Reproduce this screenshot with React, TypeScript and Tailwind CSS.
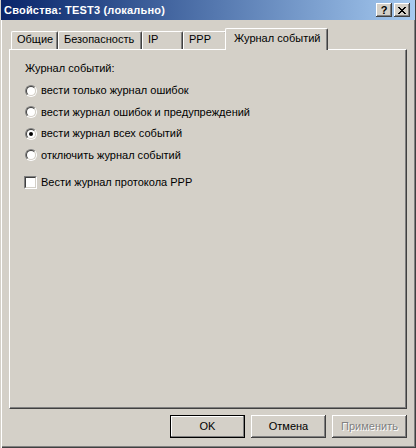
import React from "react";

const bevelOut =
  "shadow-[inset_-1px_-1px_0_#404040,inset_1px_1px_0_#ffffff,inset_-2px_-2px_0_#808080]";

function CaptionButton({ children }: { children: React.ReactNode }) {
  return (
    <div
      className={`flex h-[14px] w-[16px] items-center justify-center bg-[#d4d0c8] ${bevelOut}`}
    >
      {children}
    </div>
  );
}

function Radio({ checked }: { checked?: boolean }) {
  return (
    <div className="h-[12px] w-[12px] shrink-0 rounded-full border border-b-white border-l-[#808080] border-r-white border-t-[#808080]">
      <div className="flex h-full w-full items-center justify-center rounded-full border border-b-[#d4d0c8] border-l-[#404040] border-r-[#d4d0c8] border-t-[#404040] bg-white">
        {checked && <div className="h-[4px] w-[4px] rounded-full bg-black" />}
      </div>
    </div>
  );
}

function Checkbox() {
  return (
    <div className="h-[13px] w-[13px] shrink-0 border border-b-white border-l-[#808080] border-r-white border-t-[#808080]">
      <div className="h-full w-full border border-b-[#d4d0c8] border-l-[#404040] border-r-[#d4d0c8] border-t-[#404040] bg-white" />
    </div>
  );
}

function Tab({ label, width, active }: { label: string; width: string; active?: boolean }) {
  if (active) {
    return (
      <div
        className={`relative z-10 -mb-px -ml-[2px] flex h-[22px] ${width} items-start rounded-t-[2px] border-l border-t border-r border-l-white border-t-white border-r-[#404040] bg-[#d4d0c8] pl-[8px] pt-[3px] shadow-[inset_-1px_0_0_#808080]`}
      >
        {label}
      </div>
    );
  }
  return (
    <div
      className={`flex h-[18px] ${width} items-start rounded-t-[2px] border-l border-t border-r border-l-white border-t-white border-r-[#404040] pl-[5px] pt-[1px] shadow-[inset_-1px_0_0_#808080]`}
    >
      {label}
    </div>
  );
}

const options = [
  "вести только журнал ошибок",
  "вести журнал ошибок и предупреждений",
  "вести журнал всех событий",
  "отключить журнал событий",
];

export default function App() {
  return (
    <div className="flex h-[448px] w-[416px] flex-col bg-[#d4d0c8] font-['Liberation_Sans',Arial,sans-serif] text-[11px] leading-[13px] text-black shadow-[inset_1px_0_0_#d4d0c8,inset_2px_0_0_#ffffff,inset_-1px_-1px_0_#404040,inset_-2px_-2px_0_#808080]">
      {/* title bar */}
      <div className="mx-[1px] flex h-[20px] items-center bg-gradient-to-r from-[#0a246a] to-[#a6caf0] pl-[3px] pr-[5px]">
        <span className="flex-1 text-[11px] font-bold tracking-[0.2px] text-white">
          Свойства: TEST3 (локально)
        </span>
        <div className="flex gap-[2px]">
          <CaptionButton>
            <span className="text-[11px] font-bold leading-none">?</span>
          </CaptionButton>
          <CaptionButton>
            <svg width="8" height="7" viewBox="0 0 8 7" shapeRendering="crispEdges">
              <path
                d="M0 0h2v1h-2zM6 0h2v1h-2zM1 1h2v1h-2zM5 1h2v1h-2zM2 2h4v1h-4zM3 3h2v1h-2zM2 4h4v1h-4zM1 5h2v1h-2zM5 5h2v1h-2zM0 6h2v1h-2zM6 6h2v1h-2z"
                fill="#000"
              />
            </svg>
          </CaptionButton>
        </div>
      </div>

      {/* tabs */}
      <div className="ml-[11px] mt-[8px] flex items-end">
        <Tab label="Общие" width="w-[47px]" />
        <Tab label="Безопасность" width="w-[84px]" />
        <Tab label="IP" width="w-[41px]" />
        <Tab label="PPP" width="w-[44px]" />
        <Tab label="Журнал событий" width="w-[103px]" active />
      </div>

      {/* panel */}
      <div className="ml-[9px] flex h-[360px] w-[398px] flex-col border border-b-[#404040] border-l-white border-r-[#404040] border-t-white pl-[15px] pt-[12px] shadow-[inset_-1px_-1px_0_#808080]">
        <div>Журнал событий:</div>
        <div className="mt-[9px] flex flex-col gap-[8.5px]">
          {options.map((o, i) => (
            <div key={o} className="flex items-center gap-[4px]">
              <Radio checked={i === 2} />
              <span>{o}</span>
            </div>
          ))}
        </div>
        <div className="-ml-px mt-[14px] flex items-center gap-[4px]">
          <Checkbox />
          <span>Вести журнал протокола PPP</span>
        </div>
      </div>

      {/* buttons */}
      <div className="mr-[9px] mt-[6px] flex justify-end gap-[6px]">
        <button className="h-[23px] w-[75px] border border-black bg-[#d4d0c8] shadow-[inset_-1px_-1px_0_#808080,inset_1px_1px_0_#ffffff]">
          OK
        </button>
        <button className={`h-[23px] w-[75px] bg-[#d4d0c8] ${bevelOut}`}>Отмена</button>
        <button
          className={`h-[23px] w-[75px] bg-[#d4d0c8] text-[#808080] [text-shadow:1px_1px_0_#ffffff] ${bevelOut}`}
        >
          Применить
        </button>
      </div>
    </div>
  );
}
